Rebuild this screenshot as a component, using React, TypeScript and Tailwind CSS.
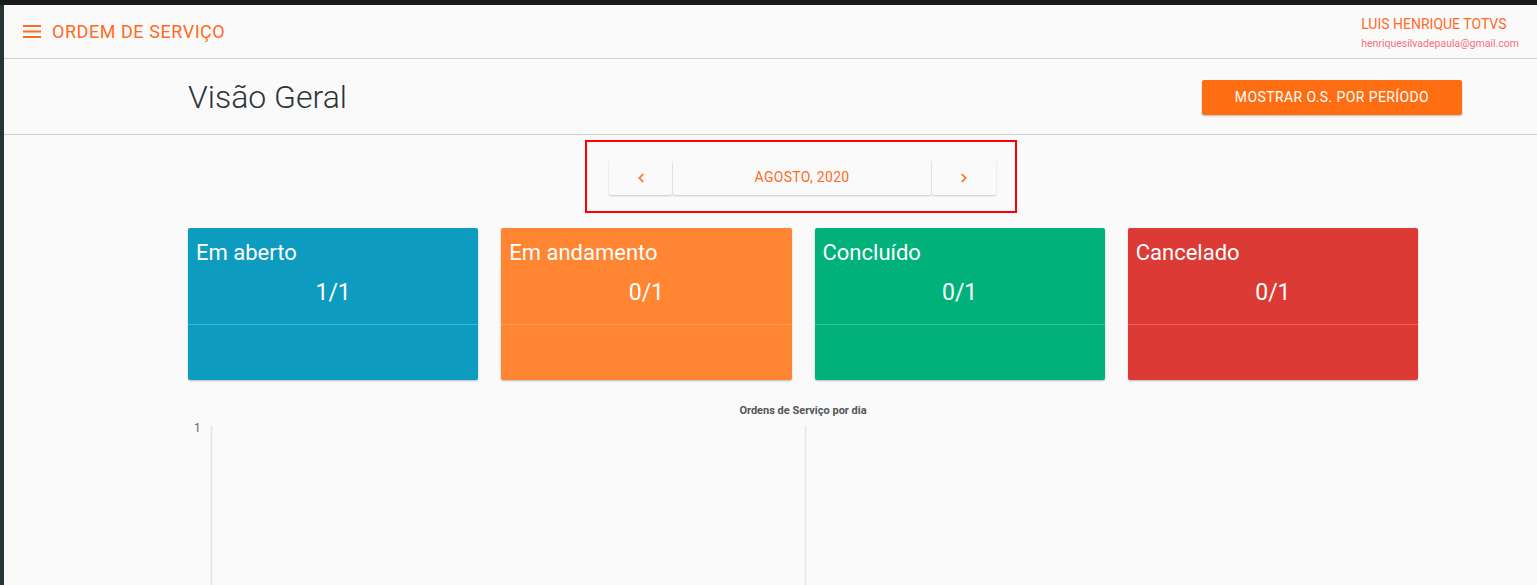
import React from "react";
import { ChevronLeft, ChevronRight } from "lucide-react";

const cards = [
  { id: 1, title: "Em aberto", value: "1/1", bg: "bg-[#0e9bc0]", line: "border-[#3cb3d2]" },
  { id: 2, title: "Em andamento", value: "0/1", bg: "bg-[#ff8533]", line: "border-[#ff9d5c]" },
  { id: 3, title: "Concluído", value: "0/1", bg: "bg-[#00b27a]", line: "border-[#33c295]" },
  { id: 4, title: "Cancelado", value: "0/1", bg: "bg-[#dc3a35]", line: "border-[#e5615d]" },
];

const App = () => {
  return (
    <div className="flex h-[585px] w-full flex-col overflow-hidden bg-[#1b1b1b] font-['Roboto',sans-serif]">
      <div className="h-[5px] shrink-0 bg-[#1b1b1b]" />
      <div className="flex min-h-0 flex-1">
        <div className="w-[4px] shrink-0 bg-[#263436]" />
        <div className="flex min-w-0 flex-1 flex-col bg-[#fafafa]">
          {/* top bar */}
          <header className="flex h-[54px] shrink-0 items-center justify-between border-b border-[#cfcfcf] pl-[19px] pr-[18px]">
            <div className="flex items-center gap-[11px]">
              <svg width="18" height="14" viewBox="0 0 18 14">
                <rect x="0" y="0" width="18" height="2" fill="#ff6a1f" />
                <rect x="0" y="5.5" width="18" height="2" fill="#ff6a1f" />
                <rect x="0" y="11" width="18" height="2" fill="#ff6a1f" />
              </svg>
              <span className="text-[18px] tracking-[0.55px] text-[#ff6a1f]">ORDEM DE SERVIÇO</span>
            </div>
            <div className="flex flex-col items-start pt-[2px]">
              <span className="text-[14px] leading-[18px] text-[#ff6a1f]">LUIS HENRIQUE TOTVS</span>
              <span className="mt-[5px] text-[10.5px] leading-[12px] text-[#f5707a]">henriquesilvadepaula@gmail.com</span>
            </div>
          </header>

          {/* sub header */}
          <div className="flex h-[76px] shrink-0 items-center justify-between border-b border-[#cfcfcf] pl-[184px] pr-[75px] pb-[1px]">
            <h1 className="pt-[2px] text-[32px] font-light text-[#2e3338]">Visão Geral</h1>
            <button className="mt-[3px] h-[35px] w-[260px] rounded-[2px] bg-[#ff6d12] text-[14px] tracking-[0.4px] text-white shadow-[0_1px_2px_rgba(0,0,0,0.25)]">
              MOSTRAR O.S. POR PERÍODO
            </button>
          </div>

          {/* month picker */}
          <div className="flex justify-center pl-[60px] pt-[5px]">
            <div className="flex h-[73px] w-[432px] items-center justify-center border-2 border-[#ff0000]">
              <div className="ml-[4px] mt-[2px] flex h-[35px]">
                <button className="flex w-[63px] items-center justify-center rounded-[2px] bg-[#fafafa] text-[#ff6a1f] shadow-[0_1px_2px_rgba(0,0,0,0.2)]">
                  <ChevronLeft size={14} strokeWidth={3} />
                </button>
                <div className="ml-[1px] flex w-[258px] items-center justify-center rounded-[2px] bg-[#fafafa] text-[14px] tracking-[0.3px] text-[#ff6a1f] shadow-[0_1px_2px_rgba(0,0,0,0.2)]">
                  AGOSTO, 2020
                </div>
                <button className="ml-[1px] flex w-[64px] items-center justify-center rounded-[2px] bg-[#fafafa] text-[#ff6a1f] shadow-[0_1px_2px_rgba(0,0,0,0.2)]">
                  <ChevronRight size={14} strokeWidth={3} />
                </button>
              </div>
            </div>
          </div>

          {/* status cards */}
          <div className="ml-[184px] mt-[15px] grid w-[1230px] grid-cols-4 gap-[23px]">
            {cards.map((card) => (
              <div
                key={card.id}
                className={`flex h-[152px] flex-col rounded-[2px] ${card.bg} text-white shadow-[0_1px_2px_rgba(0,0,0,0.25)]`}
              >
                <div className={`h-[97px] border-b px-[8px] pt-[10px] ${card.line}`}>
                  <div className="text-[22px] leading-[30px]">{card.title}</div>
                  <div className="mt-[11px] text-center text-[23px] leading-[28px]">{card.value}</div>
                </div>
              </div>
            ))}
          </div>

          {/* chart */}
          <div className="ml-[184px] mt-[23px] w-[1230px]">
            <div className="text-center text-[11px] font-bold text-[#555]">Ordens de Serviço por dia</div>
            <div className="flex">
              <span className="ml-[6px] mt-[2px] w-[12px] text-[12px] leading-[12px] text-[#666]">1</span>
              <svg width="1212" height="160" className="mt-[6px]">
                <line x1="5.5" y1="0" x2="5.5" y2="160" stroke="#e3e3e3" strokeWidth="1.5" />
                <line x1="599.5" y1="0" x2="599.5" y2="160" stroke="#e6e6e6" strokeWidth="1.5" />
              </svg>
            </div>
          </div>
        </div>
      </div>
    </div>
  );
};

export default App;
